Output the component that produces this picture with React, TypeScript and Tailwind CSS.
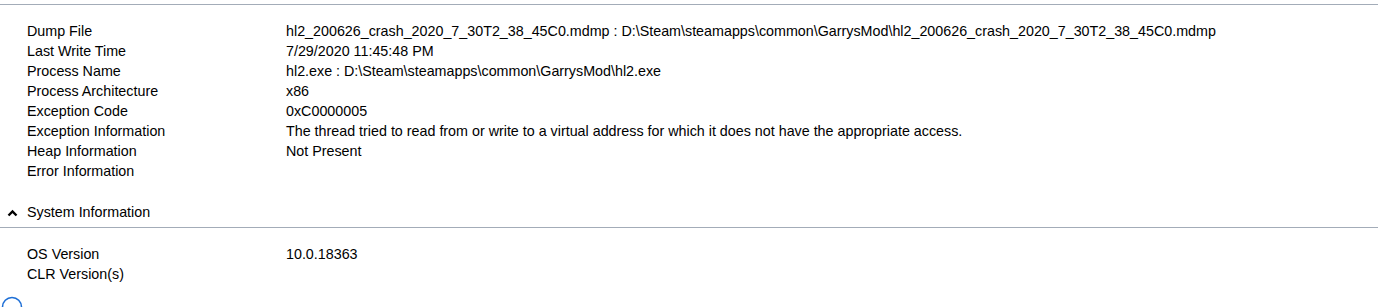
const general: [string, string][] = [
  ['Dump File', 'hl2_200626_crash_2020_7_30T2_38_45C0.mdmp : D:\\Steam\\steamapps\\common\\GarrysMod\\hl2_200626_crash_2020_7_30T2_38_45C0.mdmp'],
  ['Last Write Time', '7/29/2020 11:45:48 PM'],
  ['Process Name', 'hl2.exe : D:\\Steam\\steamapps\\common\\GarrysMod\\hl2.exe'],
  ['Process Architecture', 'x86'],
  ['Exception Code', '0xC0000005'],
  ['Exception Information', 'The thread tried to read from or write to a virtual address for which it does not have the appropriate access.'],
  ['Heap Information', 'Not Present'],
  ['Error Information', ''],
]

const system: [string, string][] = [
  ['OS Version', '10.0.18363'],
  ['CLR Version(s)', ''],
]

function Rows({ rows }: { rows: [string, string][] }) {
  return (
    <div className="flex flex-col">
      {rows.map(([k, v]) => (
        <div key={k} className="flex h-5 items-center whitespace-nowrap pt-[2px]">
          <span className="w-[286px] shrink-0 pl-[27px]">{k}</span>
          <span>{v}</span>
        </div>
      ))}
    </div>
  )
}

export default function App() {
  return (
    <div
      className="h-[307px] w-[1378px] overflow-hidden bg-white pt-[4px] text-[14.3px] text-black"
      style={{ fontFamily: '"Liberation Sans", Arial, sans-serif' }}
    >
      <div className="border-t border-[#a3acb8] pt-4">
        <Rows rows={general} />
      </div>

      {/* section header */}
      <div className="mt-[21px] flex h-5 items-center pt-[2px]">
        <svg width="27" height="18" viewBox="0 0 27 18" className="shrink-0">
          <path d="M8.5 11.5 L12.5 7.5 L16.5 11.5" fill="none" stroke="#000" strokeWidth="2.4" />
        </svg>
        <span>System Information</span>
      </div>

      <div className="mt-[5px] border-t border-[#a3acb8] pt-4">
        <Rows rows={system} />
      </div>

      <div className="mt-[12px] pl-[1px]">
        <svg width="22" height="22" viewBox="0 0 22 22">
          <circle cx="11" cy="11" r="9.5" fill="none" stroke="#1e6fd6" strokeWidth="1.6" />
        </svg>
      </div>
    </div>
  )
}
